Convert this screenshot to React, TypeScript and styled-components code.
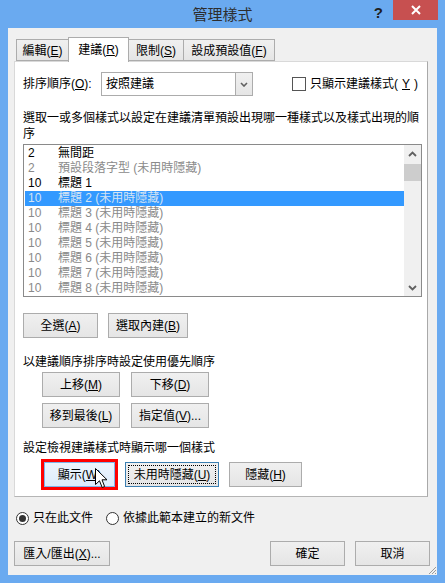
import React from "react";
import styled, { createGlobalStyle } from "styled-components";

const GlobalStyle = createGlobalStyle`
  html, body { margin: 0; padding: 0; }
  body {
    background: #6aaaf0;
    font-family: "Liberation Sans", "Noto Sans CJK TC", sans-serif;
    font-size: 12px;
    color: #000;
  }
`;

type Tone = "normal" | "muted" | "selected";

interface Row {
  n: string;
  t: string;
  tone: Tone;
}

const rows: Row[] = [
  { n: "2", t: "無間距", tone: "normal" },
  { n: "2", t: "預設段落字型 (未用時隱藏)", tone: "muted" },
  { n: "10", t: "標題 1", tone: "normal" },
  { n: "10", t: "標題 2 (未用時隱藏)", tone: "selected" },
  { n: "10", t: "標題 3 (未用時隱藏)", tone: "muted" },
  { n: "10", t: "標題 4 (未用時隱藏)", tone: "muted" },
  { n: "10", t: "標題 5 (未用時隱藏)", tone: "muted" },
  { n: "10", t: "標題 6 (未用時隱藏)", tone: "muted" },
  { n: "10", t: "標題 7 (未用時隱藏)", tone: "muted" },
  { n: "10", t: "標題 8 (未用時隱藏)", tone: "muted" },
];

const Key: React.FC<{ k: string }> = ({ k }) => (
  <>
    (<Under>{k}</Under>)
  </>
);

const App: React.FC = () => {
  return (
    <>
      <GlobalStyle />
      <Window>
        <TitleBar>
          <span />
          <TitleText>管理樣式</TitleText>
          <Controls>
            <Help>?</Help>
            <Close>
              <svg width="10" height="10" viewBox="0 0 10 10">
                <path d="M1 1 L9 9 M9 1 L1 9" stroke="#fff" strokeWidth="2" />
              </svg>
            </Close>
          </Controls>
        </TitleBar>

        <Client>
          <Tabs>
            <Tab $w={53}>
              編輯<Key k="E" />
            </Tab>
            <Tab $w={61} $active>
              建議<Key k="R" />
            </Tab>
            <Tab $w={56}>
              限制<Key k="S" />
            </Tab>
            <Tab $w={92}>
              設成預設值<Key k="F" />
            </Tab>
          </Tabs>

          <Panel>
            <SortRow>
              <FieldLabel>
                排序順序<Key k="O" />:
              </FieldLabel>
              <Combo>
                <ComboText>按照建議</ComboText>
                <ComboButton>
                  <svg width="8" height="5" viewBox="0 0 8 5">
                    <path d="M1 1 L4 4 L7 1" stroke="#606060" strokeWidth="1.6" fill="none" />
                  </svg>
                </ComboButton>
              </Combo>
              <CheckLabel>
                <CheckBox />
                只顯示建議樣式<Key k="Y" />
              </CheckLabel>
            </SortRow>

            <Description>
              選取一或多個樣式以設定在建議清單預設出現哪一種樣式以及樣式出現的順序
            </Description>

            <ListBox>
              <ListRows>
                {rows.map((r, i) => (
                  <ListRow key={i} $tone={r.tone}>
                    <Num>{r.n}</Num>
                    <span>{r.t}</span>
                  </ListRow>
                ))}
              </ListRows>
              <ScrollBar>
                <ScrollArrow>
                  <svg width="9" height="6" viewBox="0 0 9 6">
                    <path d="M1 5 L4.5 1.5 L8 5" stroke="#606060" strokeWidth="1.8" fill="none" />
                  </svg>
                </ScrollArrow>
                <Thumb />
                <ScrollTrack />
                <ScrollArrow>
                  <svg width="9" height="6" viewBox="0 0 9 6">
                    <path d="M1 1 L4.5 4.5 L8 1" stroke="#606060" strokeWidth="1.8" fill="none" />
                  </svg>
                </ScrollArrow>
              </ScrollBar>
            </ListBox>

            <ButtonRow $top={16} $indent={0} $gap={10}>
              <Btn $w={75}>
                全選<Key k="A" />
              </Btn>
              <Btn $w={80}>
                選取內建<Key k="B" />
              </Btn>
            </ButtonRow>

            <SectionLabel $top={16}>以建議順序排序時設定使用優先順序</SectionLabel>

            <ButtonRow $top={2} $indent={19} $gap={11}>
              <Btn $w={78}>
                上移<Key k="M" />
              </Btn>
              <Btn $w={78}>
                下移<Key k="D" />
              </Btn>
            </ButtonRow>
            <ButtonRow $top={6} $indent={19} $gap={11}>
              <Btn $w={78}>
                移到最後<Key k="L" />
              </Btn>
              <Btn $w={78}>
                指定值<Key k="V" />...
              </Btn>
            </ButtonRow>

            <SectionLabel $top={12}>設定檢視建議樣式時顯示哪一個樣式</SectionLabel>

            <ButtonRow $top={6} $indent={21} $gap={10}>
              <Pointed>
                <Btn $w={71} $state="hover" $marked>
                  顯示<Key k="W" />
                </Btn>
                <Cursor width="13" height="21" viewBox="0 0 13 21">
                  <path
                    d="M0.5 0.5 L0.5 16.5 L4.5 12.8 L7.2 19.5 L9.6 18.5 L7 11.8 L12 11.8 Z"
                    fill="#fff"
                    stroke="#000"
                    strokeWidth="1"
                  />
                </Cursor>
              </Pointed>
              <Btn $w={94} $state="focus">
                未用時隱藏<Key k="U" />
              </Btn>
              <Btn $w={73}>
                隱藏<Key k="H" />
              </Btn>
            </ButtonRow>
          </Panel>

          <RadioRow>
            <RadioLabel>
              <Radio $checked />
              只在此文件
            </RadioLabel>
            <RadioLabel>
              <Radio />
              依據此範本建立的新文件
            </RadioLabel>
          </RadioRow>

          <Footer>
            <Btn $w={96}>
              匯入/匯出<Key k="X" />...
            </Btn>
            <FooterRight>
              <Btn $w={75}>確定</Btn>
              <Btn $w={75}>取消</Btn>
            </FooterRight>
          </Footer>

          <Grip width="9" height="9" viewBox="0 0 9 9">
            <path d="M8 1 L1 8 M8 4 L4 8 M8 7 L7 8" stroke="#9a9a9a" strokeWidth="1" />
          </Grip>
        </Client>
      </Window>
    </>
  );
};

const Window = styled.div`
  width: 445px;
  height: 583px;
  background: #6aaaf0;
  display: flex;
  flex-direction: column;
  overflow: hidden;
`;

const TitleBar = styled.div`
  height: 30px;
  display: grid;
  grid-template-columns: 75px 1fr 75px;
  align-items: start;
`;

const TitleText = styled.div`
  text-align: center;
  font-size: 15px;
  line-height: 20px;
  padding-top: 4px;
  color: #2d2d2d;
  font-family: "Noto Sans CJK TC", sans-serif;
`;

const Controls = styled.div`
  display: flex;
  align-items: flex-start;
  justify-content: flex-end;
  padding-right: 7px;
`;

const Help = styled.span`
  font-family: "Liberation Sans", sans-serif;
  font-weight: bold;
  font-size: 15px;
  line-height: 20px;
  padding-top: 3px;
  margin-right: 10px;
  color: #1e1e1e;
`;

const Close = styled.div`
  width: 45px;
  height: 20px;
  background: #c75050;
  display: flex;
  align-items: center;
  justify-content: center;
`;

const Client = styled.div`
  position: relative;
  flex: 1;
  margin: 0 8px 8px 8px;
  background: #f0f0f0;
  padding: 9px 7px 9px 6px;
  display: flex;
  flex-direction: column;
`;

const Tabs = styled.div`
  display: flex;
  align-items: flex-end;
  height: 24px;
  margin-left: 2px;
  position: relative;
  z-index: 1;
`;

const Tab = styled.div<{ $w: number; $active?: boolean }>`
  box-sizing: border-box;
  width: ${(p) => p.$w}px;
  height: ${(p) => (p.$active ? 25 : 22)}px;
  margin-bottom: ${(p) => (p.$active ? -1 : 0)}px;
  margin-left: -1px;
  border: 1px solid #acacac;
  border-bottom: ${(p) => (p.$active ? "none" : "1px solid #acacac")};
  background: ${(p) => (p.$active ? "#fff" : "linear-gradient(#f0f0f0, #e5e5e5)")};
  display: flex;
  align-items: center;
  justify-content: center;
  padding-top: ${(p) => (p.$active ? 0 : 1)}px;
  line-height: 16px;
  &:first-child {
    margin-left: 0;
  }
`;

const Panel = styled.div`
  margin-right: 2px;
  background: #fff;
  border: 1px solid #d9d9d9;
  border-right-color: #a9a9a9;
  border-bottom-color: #b5b5b5;
  padding: 10px 6px 9px 8px;
  display: flex;
  flex-direction: column;
`;

const SortRow = styled.div`
  display: flex;
  align-items: center;
  height: 24px;
`;

const FieldLabel = styled.span`
  width: 78px;
  line-height: 16px;
`;

const Combo = styled.div`
  box-sizing: border-box;
  width: 152px;
  height: 24px;
  border: 1px solid #acacac;
  display: flex;
  background: #fff;
`;

const ComboText = styled.span`
  flex: 1;
  padding-left: 4px;
  line-height: 22px;
`;

const ComboButton = styled.span`
  width: 16px;
  border-left: 1px solid #acacac;
  background: linear-gradient(#f0f0f0, #e5e5e5);
  display: flex;
  align-items: center;
  justify-content: center;
`;

const CheckLabel = styled.label`
  margin-left: auto;
  margin-right: 3px;
  display: flex;
  align-items: center;
  gap: 4px;
  line-height: 16px;
`;

const CheckBox = styled.span`
  box-sizing: border-box;
  width: 14px;
  height: 14px;
  border: 1px solid #555;
  background: #fff;
`;

const Description = styled.div`
  margin-top: 14px;
  line-height: 16px;
  width: 399px;
`;

const ListBox = styled.div`
  box-sizing: border-box;
  margin-top: 2px;
  width: 399px;
  height: 153px;
  border: 1px solid #8a8a8a;
  display: grid;
  grid-template-columns: 1fr 17px;
`;

const ListRows = styled.div`
  padding: 1px 0 0 1px;
`;

const ListRow = styled.div<{ $tone: Tone }>`
  display: flex;
  height: 15px;
  line-height: 15px;
  padding-left: 3px;
  white-space: nowrap;
  color: ${(p) => (p.$tone === "normal" ? "#000" : p.$tone === "selected" ? "#d3e3f3" : "#8a8a8a")};
  background: ${(p) => (p.$tone === "selected" ? "#3399ff" : "transparent")};
`;

const Num = styled.span`
  width: 30px;
`;

const ScrollBar = styled.div`
  background: #f0f0f0;
  display: flex;
  flex-direction: column;
`;

const ScrollArrow = styled.div`
  height: 17px;
  display: flex;
  align-items: center;
  justify-content: center;
`;

const Thumb = styled.div`
  height: 17px;
  background: #cdcdcd;
  margin: 2px 0 0 0;
`;

const ScrollTrack = styled.div`
  flex: 1;
`;

const ButtonRow = styled.div<{ $top: number; $indent: number; $gap: number }>`
  display: flex;
  margin-top: ${(p) => p.$top}px;
  padding-left: ${(p) => p.$indent}px;
  gap: ${(p) => p.$gap}px;
`;

const SectionLabel = styled.div<{ $top: number }>`
  margin-top: ${(p) => p.$top}px;
  line-height: 16px;
`;

const Btn = styled.button<{ $w: number; $state?: "hover" | "focus"; $marked?: boolean }>`
  box-sizing: border-box;
  width: ${(p) => p.$w}px;
  height: 25px;
  padding: 0;
  font: inherit;
  color: #000;
  line-height: 16px;
  white-space: nowrap;
  border: 1px solid ${(p) => (p.$state === "hover" ? "#7eb4ea" : p.$state === "focus" ? "#3c7fb1" : "#acacac")};
  background: ${(p) =>
    p.$state === "hover" ? "linear-gradient(#ecf4fc, #dcecfc)" : "linear-gradient(#f0f0f0, #e5e5e5)"};
  outline: ${(p) => (p.$marked ? "3px solid #ff0000" : p.$state === "focus" ? "1px dotted #000" : "none")};
  outline-offset: ${(p) => (p.$marked ? "0px" : "-4px")};
`;

const Pointed = styled.div`
  position: relative;
  display: flex;
`;

const Cursor = styled.svg`
  position: absolute;
  left: 51px;
  top: 6px;
`;

const RadioRow = styled.div`
  display: flex;
  align-items: center;
  gap: 13px;
  margin-top: 13px;
  padding-left: 2px;
`;

const RadioLabel = styled.label`
  display: flex;
  align-items: center;
  gap: 4px;
  line-height: 16px;
`;

const Radio = styled.span<{ $checked?: boolean }>`
  box-sizing: border-box;
  width: 13px;
  height: 13px;
  border-radius: 50%;
  border: 1px solid #333;
  background: #fff;
  display: flex;
  align-items: center;
  justify-content: center;
  &::after {
    content: "";
    width: 7px;
    height: 7px;
    border-radius: 50%;
    background: ${(p) => (p.$checked ? "#333" : "transparent")};
  }
`;

const Footer = styled.div`
  display: flex;
  margin-top: 15px;
`;

const FooterRight = styled.div`
  display: flex;
  gap: 10px;
  margin-left: auto;
`;

const Grip = styled.svg`
  position: absolute;
  right: 0;
  bottom: 0;
`;

const Under = styled.u`
  text-underline-offset: 1px;
`;

export default App;
